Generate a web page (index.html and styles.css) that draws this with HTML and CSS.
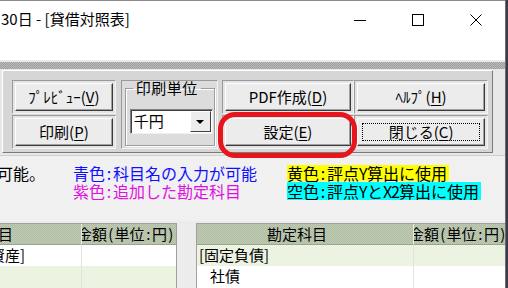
FILE: index.html
```html
<!DOCTYPE html>
<html lang="ja">
<head>
<meta charset="utf-8">
<link rel="stylesheet" href="styles.css">
</head>
<body>
<div class="window">
  <div class="titlebar">
    <span class="title">30日 - [貸借対照表]</span>
    <div class="controls">
      <span class="ctl"><svg width="12" height="12" viewBox="0 0 12 12"><path d="M0 6.5H12" stroke="#000" stroke-width="1"/></svg></span>
      <span class="ctl"><svg width="12" height="12" viewBox="0 0 12 12"><rect x="0.5" y="0.5" width="11" height="11" fill="none" stroke="#000" stroke-width="1"/></svg></span>
      <span class="ctl"><svg width="12" height="12" viewBox="0 0 12 12"><path d="M0.5 0.5L11.5 11.5M11.5 0.5L0.5 11.5" stroke="#000" stroke-width="1"/></svg></span>
    </div>
  </div>
  <div class="toolbar">
    <div class="band"></div>
    <div class="panel">
      <div class="col narrow">
        <div class="cell"><button class="btn">ﾌﾟﾚﾋﾞｭｰ(<u>V</u>)</button></div>
        <div class="cell"><button class="btn">印刷(<u>P</u>)</button></div>
      </div>
      <div class="cell groupcell">
        <fieldset class="group">
          <legend>印刷単位</legend>
          <div class="combo"><span class="combo-text">千円</span><span class="drop"><svg width="8" height="4" viewBox="0 0 8 4"><path d="M0 0H8L4 4Z" fill="#000"/></svg></span></div>
        </fieldset>
      </div>
      <div class="col wide">
        <div class="cell"><button class="btn">PDF作成(<u>D</u>)</button></div>
        <div class="cell"><button class="btn">設定(<u>E</u>)</button></div>
      </div>
      <div class="col wide">
        <div class="cell"><button class="btn">ﾍﾙﾌﾟ(<u>H</u>)</button></div>
        <div class="cell"><button class="btn focus">閉じる(<u>C</u>)</button></div>
      </div>
    </div>
  </div>
  <div class="info">
    <div class="note plain">可能。</div>
    <div class="note blue">青色<span class="colon">:</span>科目名の入力が可能</div>
    <div class="note"><span class="tag yellow">黄色<span class="colon">:</span>評点<span class="half">Y</span>算出に使用</span></div>
    <div class="note"></div>
    <div class="note magenta">紫色<span class="colon">:</span>追加した勘定科目</div>
    <div class="note"><span class="tag cyan">空色<span class="colon">:</span>評点<span class="half">Y</span>と<span class="half">X</span><span class="half">2</span>算出に使用</span></div>
  </div>
  <div class="tables">
    <div class="grid left">
      <div class="hd c1 lefthd">勘定科目</div>
      <div class="hd c2"><span class="clip">金額<span class="hw">(</span>単位<span class="hw">:</span>円<span class="hw">)</span></span></div>
      <div class="td c1 white">[固定資産]</div>
      <div class="td c2 white"></div>
      <div class="td c1 green"></div>
      <div class="td c2 green"></div>
    </div>
    <div class="grid right">
      <div class="hd c1 center">勘定科目</div>
      <div class="hd c2"><span class="clip">金額<span class="hw">(</span>単位<span class="hw">:</span>円<span class="hw">)</span></span></div>
      <div class="td c1 green">[固定負債]</div>
      <div class="td c2 green"></div>
      <div class="td c1 white indent">社債</div>
      <div class="td c2 white"></div>
    </div>
  </div>
</div>
<div class="highlight"></div>
</body>
</html>
```
FILE: styles.css
```css
* { box-sizing: border-box; margin: 0; padding: 0; }
html, body { width: 508px; height: 288px; overflow: hidden; }
body {
  position: relative;
  background: #3a3a4c;
  font-family: "Noto Sans CJK JP", "Noto Sans", sans-serif;
  color: #000;
}
.window {
  width: 506px;
  height: 288px;
  background: #f0f0f0;
  border-right: 1px solid #6c6c6c;
  display: flex;
  flex-direction: column;
}
.titlebar {
  height: 60px;
  flex: none;
  background: #fff;
  border-top: 1px solid #8a8a8a;
  display: flex;
  align-items: flex-start;
}
.title {
  font-size: 15px;
  line-height: 20px;
  margin: 8px 0 0 1px;
  white-space: nowrap;
}
.controls { margin-left: auto; display: flex; }
.ctl {
  width: 58px;
  height: 38px;
  display: flex;
  align-items: center;
  justify-content: center;
}
.ctl svg { display: block; }

.toolbar {
  height: 95px;
  flex: none;
  background: #e8e8e8;
  display: flex;
  flex-direction: column;
}
.band {
  height: 9px;
  flex: none;
  background:
    linear-gradient(#e9e9e9 0 2px, transparent 2px),
    repeating-conic-gradient(#9c9c9c 0 25%, #bcbcbc 0 50%) 0 0 / 2px 2px;
}
.panel {
  margin: 1px 12px 2px 2px;
  flex: 1;
  border: 1px solid;
  border-color: #ffffff #7a7a7a #7a7a7a #ffffff;
  background: repeating-conic-gradient(#d2d2d2 0 25%, #dadada 0 50%) 0 0 / 2px 2px;
  padding: 9px 4px 0 9px;
  display: flex;
  align-items: flex-start;
}
.col { display: flex; flex-direction: column; gap: 1px; }
.narrow { width: 104px; margin-right: 5px; }
.wide { width: 133px; }
.wide + .wide { width: 134px; }
.cell {
  height: 34px;
  border: 1px solid;
  border-color: #9a9a9a #f4f4f4 #f4f4f4 #9a9a9a;
  background: #e4e4e4;
  padding: 2px;
}
.btn {
  width: 100%;
  height: 100%;
  display: flex;
  align-items: center;
  justify-content: center;
  background: #ececec;
  border: 1px solid;
  border-color: #ffffff #3c3c3c #3c3c3c #ffffff;
  box-shadow: inset -1px -1px #a0a0a0;
  font-family: "Noto Sans CJK JP", "Noto Sans", sans-serif;
  font-size: 15px;
  line-height: 18px;
  color: #000;
  white-space: nowrap;
}
.btn u { text-decoration-thickness: 1px; text-underline-offset: 2px; }
.focus { outline: 1px dotted #000; outline-offset: -6px; }

.groupcell {
  width: 97px;
  height: 69px;
  margin-right: 4px;
  background: repeating-conic-gradient(#d8d8d8 0 25%, #e0e0e0 0 50%) 0 0 / 2px 2px;
  padding: 0 2px 2px 2px;
}
.group {
  height: 100%;
  margin-left: 1px;
  border: 1px solid #9c9c9c;
  box-shadow: 1px 1px 0 #fff, inset 1px 1px 0 #fff;
  padding: 0 0 0 4px;
}
.group legend {
  margin-left: 3px;
  padding: 0 3px;
  font-size: 15px;
  line-height: 14px;
  letter-spacing: 0.5px;
}
.combo {
  margin-top: 14px;
  width: 83px;
  height: 25px;
  background: #fff;
  border: 1px solid;
  border-color: #808080 #f0f0f0 #f0f0f0 #808080;
  box-shadow: inset 1px 1px #404040;
  display: flex;
  align-items: stretch;
}
.combo-text {
  flex: 1;
  font-size: 15px;
  line-height: 22px;
  padding-left: 3px;
}
.drop {
  width: 21px;
  margin: 1px 1px 1px 0;
  background: #ececec;
  border: 1px solid;
  border-color: #ffffff #404040 #404040 #ffffff;
  display: flex;
  align-items: center;
  justify-content: center;
}
.drop svg { display: block; }

.info {
  height: 66px;
  flex: none;
  display: grid;
  grid-template-columns: 73px 214px 1fr;
  grid-auto-rows: 18px;
  align-content: start;
  padding-top: 8px;
  border-top: 1px solid #cfcfcf;
  background: repeating-conic-gradient(#eeeeee 0 25%, #f3f3f3 0 50%) 0 0 / 2px 2px;
  font-size: 16px;
  line-height: 18px;
  white-space: nowrap;
}
.note.plain { margin-left: -3px; }
.blue { color: #1010ff; }
.magenta { color: #e010e0; }
.colon { display: inline-block; width: 8px; text-align: center; }
.half { display: inline-block; width: 8px; text-align: center; }
.tag { display: inline-block; padding-right: 2px; }
.yellow { background: #ffff00; line-height: 16px; margin-top: 1px; }
.cyan { background: #00ffff; }

.tables {
  flex: 1;
  display: flex;
  padding-top: 2px;
  background: #ececec;
  overflow: hidden;
}
.grid {
  display: grid;
  grid-template-rows: 21px 21px 24px;
  border-top: 1px solid #a0a0a0;
  font-size: 15px;
  line-height: 20px;
  white-space: nowrap;
}
.grid.left {
  grid-template-columns: 129px 94px;
  margin-left: -47px;
  border-right: 1px solid #a0a0a0;
}
.grid.right {
  grid-template-columns: 217px 93px;
  margin-left: 19px;
  border-left: 1px solid #a0a0a0;
}
.hd {
  background: repeating-conic-gradient(#b0bda4 0 25%, #c0cbb4 0 50%) 0 0 / 2px 2px;
  border-bottom: 1px solid #9aa58e;
  overflow: hidden;
}
.hd.c1 { border-right: 1px solid #e6ece0; }
.lefthd { padding-left: 0; }
.center { text-align: center; padding-right: 16px; }
.clip { display: block; margin-left: -5px; }
.hw { display: inline-block; width: 7.5px; text-align: center; }
.td { overflow: hidden; }
.td.c1 { border-right: 1px solid #dfe5da; padding-left: 2px; }
.indent { padding-left: 13px !important; }
.white { background: #ffffff; }
.green { background: repeating-conic-gradient(#e8f0dc 0 25%, #f0f6e8 0 50%) 0 0 / 2px 2px; }

.highlight {
  position: absolute;
  left: 218px;
  top: 112px;
  width: 139px;
  height: 46px;
  border: 5px solid #e8151d;
  border-radius: 17px;
}
```
